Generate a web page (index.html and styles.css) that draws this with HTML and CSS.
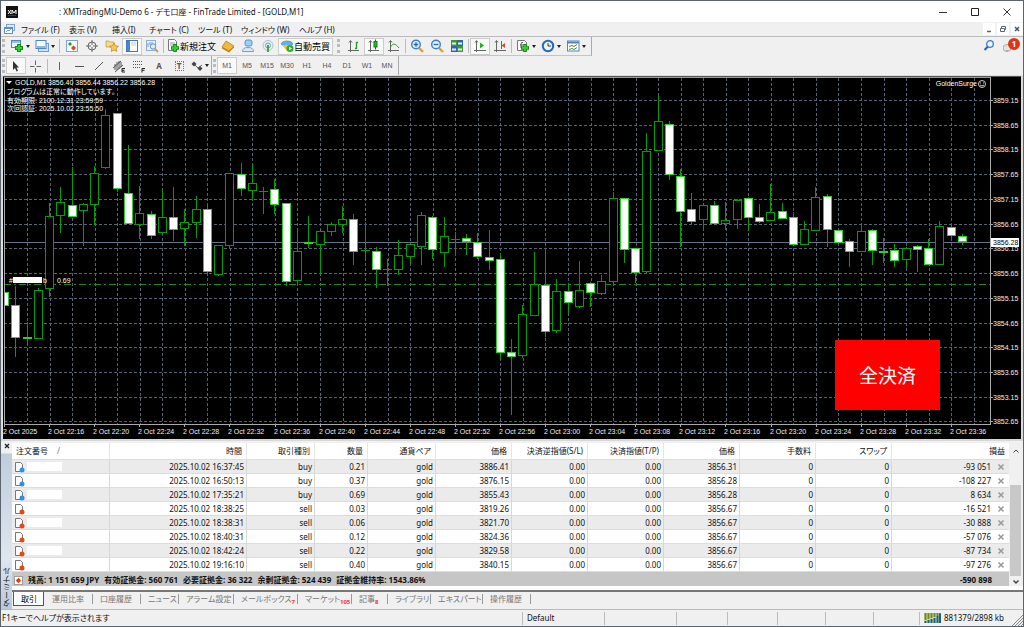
FILE: index.html
```
<!DOCTYPE html>
<html lang="ja">
<head>
<meta charset="utf-8">
<title>XMTradingMU-Demo 6 - FinTrade Limited</title>
<link rel="stylesheet" href="styles.css">
</head>
<body>
<div class="window">
  <header class="titlebar">
    <svg class="logo" viewBox="0 0 12 12"><rect width="12" height="12" fill="#111"/><path d="M2 4l3 4M5 4L2 8M6 8V4l2 3 2-3v4" stroke="#fff" fill="none"/><path d="M2 9.500h8" stroke="#b33" stroke-width=".6"/></svg>
    <h1 class="title">: XMTradingMU-Demo 6 - デモ口座 - FinTrade Limited - [GOLD,M1]</h1>
    <div class="winctl">
      <button aria-label="最小化"><svg viewBox="0 0 10 10"><path d="M1 5.500h8" stroke="#333"/></svg></button>
      <button aria-label="最大化"><svg viewBox="0 0 10 10"><path d="M1.500 1.500h7v7h-7z" stroke="#222" fill="none"/></svg></button>
      <button aria-label="閉じる"><svg viewBox="0 0 10 10"><path d="M1.500 1.500l7 7M8.500 1.500l-7 7" stroke="#333"/></svg></button>
    </div>
  </header>

  <nav class="menubar">
    <svg class="menuicon" viewBox="0 0 11 11"><rect x="2.500" y=".5" width="8" height="6" fill="#dcebfa" stroke="#7aa5d6"/><rect x=".5" y="3.500" width="8" height="6" fill="#fff" stroke="#5b8fcb"/><path d="M.5 4.500h8" stroke="#5b8fcb"/><path d="M2 8l2-2 1 1 2-2" stroke="#7aa5d6" fill="none"/></svg>
    <div class="menus">
      <button>ファイル (F)</button><button>表示 (V)</button><button>挿入(I)</button><button>チャート (C)</button><button>ツール (T)</button><button>ウィンドウ (W)</button><button>ヘルプ (H)</button>
    </div>
    <div class="mdictl">
      <button aria-label="子ウィンドウ最小化"><svg viewBox="0 0 8 8"><path d="M2 6.500h4" stroke="#567" stroke-width="1.500"/></svg></button>
      <button aria-label="元のサイズに戻す"><svg viewBox="0 0 8 8"><path d="M2.500 3V1.500h4v3H5.500M1.500 3.500h4v3h-4z" stroke="#567" fill="none"/></svg></button>
      <button aria-label="子ウィンドウを閉じる"><svg viewBox="0 0 8 8"><path d="M2 2l4 4M6 2L2 6" stroke="#456" stroke-width="1.500"/></svg></button>
    </div>
  </nav>

  <div class="toolrow">
    <div class="toolbar">
      <i class="grip"></i>
      <button class="tool drop" aria-label="新規チャート"><svg viewBox="0 0 14 14"><rect x="1.500" y="1.500" width="9" height="7" fill="#eaf3fc" stroke="#4d88c4"/><path d="M1.500 3h9" stroke="#4d88c4"/><path d="M9 5v8M5 9h8" stroke="#168a16" stroke-width="4"/><path d="M9 6v6M6 9h6" stroke="#2fd02f" stroke-width="2"/></svg><b class="caret"></b></button>
      <button class="tool drop" aria-label="チャートの組表示"><svg viewBox="0 0 14 14"><rect x="3.500" y="4.500" width="10" height="8" fill="#cfe2f5" stroke="#6a9dd0"/><rect x="1" y="1.500" width="10" height="8" fill="#f4f9fe" stroke="#4d88c4"/><path d="M2 8h8" stroke="#8db7e0" stroke-width="2"/></svg><b class="caret"></b></button>
      <i class="sep wide"></i>
      <button class="tool" aria-label="気配値表示"><svg viewBox="0 0 14 14"><rect x="1.500" y="1.500" width="11" height="11" fill="#fff" stroke="#7aa5d6"/><path d="M5 3l2 2-2 2-2-2z" fill="#20a020"/><path d="M8.500 6.500l2.500 2.500-2.500 2.500L6 9z" fill="#e04020"/></svg></button>
      <button class="tool" aria-label="データウィンドウ"><svg viewBox="0 0 14 14"><circle cx="7" cy="7" r="4" fill="none" stroke="#666"/><path d="M7 1v5M7 8v5M1 7h5M8 7h5" stroke="#666"/></svg></button>
      <button class="tool" aria-label="ナビゲーター"><svg viewBox="0 0 14 14"><path d="M1 2h3l1 1h4v5H1z" fill="#f5dc8a" stroke="#c09030" stroke-width=".7"/><path d="M9 4l1.400 2.800 3.100.4-2.300 2.100.6 3.100L9 11l-2.800 1.400.6-3.100-2.300-2.100 3.100-.4z" fill="#f8c850" stroke="#b8821a" stroke-width=".7"/></svg></button>
      <button class="tool on" aria-label="ターミナル"><svg viewBox="0 0 14 14"><rect x="1.500" y="1.500" width="11" height="11" fill="#fff" stroke="#4078b8"/><rect x="2" y="2" width="3" height="10" fill="#4d88c4"/><path d="M6 4h5M6 6h5" stroke="#bcd"/></svg></button>
      <button class="tool" aria-label="ストラテジーテスター"><svg viewBox="0 0 14 14"><rect x="1.500" y="1.500" width="9" height="10" fill="#eaf3fc" stroke="#8ab0d8"/><path d="M3 4v4M5 3v3M7 3v2" stroke="#6a9dd0"/><circle cx="8" cy="7.500" r="2.700" fill="#d8ecfc" stroke="#6b8db0"/><path d="M10 10l3 3" stroke="#d09a40" stroke-width="1.800"/></svg></button>
      <i class="sep"></i>
      <button class="tool label"><svg viewBox="0 0 14 14"><path d="M2.500.5h6l2 2v9h-8z" fill="#fff" stroke="#777"/><path d="M4 4h5M4 6h4" stroke="#999"/><path d="M9 5v8M5 9h8" stroke="#168a16" stroke-width="3.600"/><path d="M9 6v6M6 9h6" stroke="#2fd02f" stroke-width="2"/></svg>新規注文</button>
      <button class="tool" aria-label="メタエディター"><svg viewBox="0 0 14 14"><path d="M5 2l8 5-5 5-7-4z" fill="#f0b93a" stroke="#a87820" stroke-width=".7"/><path d="M1 8l7 4 5-5v1.500L8 13.500 1 9.500z" fill="#b8801c"/></svg></button>
      <button class="tool" aria-label="コミュニティ"><svg viewBox="0 0 14 14"><rect x="4" y="1" width="7" height="6" rx="2" fill="#9cd0f4" stroke="#4a98d0"/><path d="M1.500 12.500c0-3 2-4 5.500-4s5.500 1 5.500 4z" fill="#dce8f2" stroke="#7d9fbd"/></svg></button>
      <button class="tool" aria-label="シグナル"><svg viewBox="0 0 14 14"><circle cx="7" cy="6.500" r="5" fill="#e6eff4" stroke="#a9c0cc"/><circle cx="7" cy="6.500" r="2.500" fill="none" stroke="#69a0c0"/><path d="M7 6v7" stroke="#3aaa3a" stroke-width="2"/></svg></button>
      <button class="tool label on"><svg viewBox="0 0 14 14"><path d="M1 5c1-4 11-4 12 0l-3 2H4z" fill="#62b4e4" stroke="#3a85b5" stroke-width=".7"/><path d="M2 6l5 6 5-6z" fill="#f0c040"/><circle cx="10" cy="9.500" r="3.500" fill="#25b125"/><path d="M9 7.500v4l3-2z" fill="#fff"/></svg>自動売買</button>
      <i class="grip mid"></i>
      <button class="tool" aria-label="バーチャート"><svg viewBox="0 0 14 14"><path d="M3.500 2v11M1 11.500h11M2 3.500l1.500-2 1.500 2" stroke="#666" fill="none"/><path d="M9.500 3v7M9.500 3.500H11M8 9.500h1.500" stroke="#20a020" stroke-width="1.300"/></svg></button>
      <button class="tool on" aria-label="ローソク足"><svg viewBox="0 0 14 14"><path d="M3.500 2v11M1 11.500h11M2 3.500l1.500-2 1.500 2" stroke="#666" fill="none"/><path d="M8.500.5v10" stroke="#108010"/><rect x="7" y="2.500" width="3" height="5.500" fill="#20c020" stroke="#108010"/></svg></button>
      <button class="tool" aria-label="ラインチャート"><svg viewBox="0 0 14 14"><path d="M3.500 2v11M1 11.500h11M2 3.500l1.500-2 1.500 2" stroke="#666" fill="none"/><path d="M3.500 8C6 4 8 4 12 9" stroke="#20a020" fill="none"/></svg></button>
      <i class="sep"></i>
      <button class="tool" aria-label="拡大"><svg viewBox="0 0 14 14"><path d="M9 9l4 4" stroke="#d8a030" stroke-width="2.400"/><circle cx="6" cy="5.500" r="4.300" fill="#dff0ff" stroke="#3c80c8" stroke-width="1.400"/><path d="M6 3.200v4.600M3.700 5.500h4.600" stroke="#2868b0" stroke-width="1.300"/></svg></button>
      <button class="tool" aria-label="縮小"><svg viewBox="0 0 14 14"><path d="M9 9l4 4" stroke="#d8a030" stroke-width="2.400"/><circle cx="6" cy="5.500" r="4.300" fill="#dff0ff" stroke="#3c80c8" stroke-width="1.400"/><path d="M3.700 5.500h4.600" stroke="#2868b0" stroke-width="1.300"/></svg></button>
      <button class="tool" aria-label="整列"><svg viewBox="0 0 14 14"><rect x="1" y="1" width="6" height="6" fill="#3a9a2a"/><rect x="7" y="1" width="6" height="6" fill="#2f62b8"/><rect x="1" y="7" width="6" height="6" fill="#2f62b8"/><rect x="7" y="7" width="6" height="6" fill="#3a9a2a"/><path d="M2 4.500h4M8 4.500h4M2 10.500h4M8 10.500h4" stroke="#e8f4e8" stroke-width="2"/></svg></button>
      <i class="sep"></i>
      <button class="tool on" aria-label="自動スクロール"><svg viewBox="0 0 14 14"><path d="M3.500 2v11M1 11.500h12M2 3.500l1.500-2 1.500 2" stroke="#666" fill="none"/><path d="M7 3.500v6L11 6.500z" fill="#20b020"/></svg></button>
      <button class="tool" aria-label="チャートシフト"><svg viewBox="0 0 14 14"><path d="M3.500 2v11M1 11.500h12M2 3.500l1.500-2 1.500 2M8.500 2v8" stroke="#666" fill="none"/><path d="M12 4v5L8.500 6.500z" fill="#d05020"/></svg></button>
      <i class="sep"></i>
      <button class="tool drop" aria-label="インディケータ"><svg viewBox="0 0 14 14"><path d="M1.500 1.500h7l2 2v8h-9z" fill="#fff" stroke="#777"/><path d="M5 9V5q0-2 2-1.500M4 6h3" stroke="#555" fill="none"/><path d="M9 5v8M5 9h8" stroke="#168a16" stroke-width="3.600"/><path d="M9 6v6M6 9h6" stroke="#2fd02f" stroke-width="2"/></svg><b class="caret"></b></button>
      <button class="tool drop" aria-label="時間足"><svg viewBox="0 0 14 14"><circle cx="7" cy="7" r="5.200" fill="#eaf4ff" stroke="#2468b8" stroke-width="2"/><path d="M7 4v3h3" stroke="#333" fill="none"/></svg><b class="caret"></b></button>
      <button class="tool drop" aria-label="定型チャート"><svg viewBox="0 0 14 14"><rect x="1.500" y="2" width="11.500" height="10" fill="#fff" stroke="#4d88c4"/><path d="M1.500 3.500H13" stroke="#4d88c4" stroke-width="2"/><path d="M3 7.500l3-1 2 1 3-2" stroke="#a06020" fill="none"/><path d="M3 10.500l3-1 2 1 3-2" stroke="#30a030" fill="none"/></svg><b class="caret"></b></button>
    </div>
    <div class="tools-right">
      <button aria-label="検索"><svg viewBox="0 0 14 14"><circle cx="8" cy="5" r="3.300" fill="#eef6ff" stroke="#3a7fd5" stroke-width="1.300"/><path d="M6 7.500L2.500 11" stroke="#2a66c8" stroke-width="2.200"/></svg></button>
      <button class="notice" aria-label="通知"><svg viewBox="0 0 14 14"><ellipse cx="4" cy="9" rx="4" ry="3.500" fill="#e4e4e4" stroke="#aaa"/><path d="M3 11l1 2 2-2z" fill="#aaa"/></svg><span class="badge">1</span></button>
    </div>
  </div>

  <div class="toolrow second">
    <div class="toolbar">
      <i class="grip"></i>
      <button class="tool on" aria-label="カーソル"><svg viewBox="0 0 14 14"><path d="M4 2v9l2-2 1.500 3.500 1.500-.7L7.500 8.500H10z" fill="#333"/></svg></button>
      <button class="tool" aria-label="十字カーソル"><svg viewBox="0 0 14 14"><path d="M6.500 1.500v4.500M6.500 9v4.500M1 7.500h4.500M7.500 7.500H12" stroke="#666"/></svg></button>
      <i class="sep"></i>
      <button class="tool" aria-label="垂直線"><svg viewBox="0 0 14 14"><path d="M7.500 3v8" stroke="#666"/></svg></button>
      <button class="tool" aria-label="水平線"><svg viewBox="0 0 14 14"><path d="M3 7.500h9" stroke="#555"/></svg></button>
      <button class="tool" aria-label="トレンドライン"><svg viewBox="0 0 14 14"><path d="M3 11l8-8" stroke="#555"/></svg></button>
      <button class="tool" aria-label="チャネル"><svg viewBox="0 0 14 14"><path d="M1 9l8-7M3 13l8-7M3 5v6M5 3v8M7 2v8M9 3v5" stroke="#555"/><path d="M13 9.500h-3v3.500h3M10 11.300h2.500" stroke="#222" fill="none"/></svg></button>
      <button class="tool" aria-label="フィボナッチ"><svg viewBox="0 0 14 14"><path d="M1 2.500h10M1 5.500h10M1 8.500h8" stroke="#555" stroke-dasharray="1 1"/><path d="M13 9.500h-3v4M10 11.300h2.500" stroke="#222" fill="none"/></svg></button>
      <button class="tool letter" aria-label="テキスト">A</button>
      <button class="tool letter" aria-label="テキストラベル"><span class="boxed">T</span></button>
      <button class="tool drop" aria-label="矢印"><svg viewBox="0 0 14 14"><path d="M4 2.500L6.500 5 4 7.500 1.500 5z" fill="#444"/><path d="M5 6l3 3 4-3" stroke="#666" fill="none"/><path d="M10 7l2.500 2.500L10 12 7.500 9.500z" fill="#444"/></svg><b class="caret"></b></button>
    </div>
    <div class="toolbar frames">
      <i class="grip"></i>
      <button class="tool on">M1</button><button class="tool">M5</button><button class="tool">M15</button><button class="tool">M30</button><button class="tool">H1</button><button class="tool">H4</button><button class="tool">D1</button><button class="tool">W1</button><button class="tool">MN</button>
    </div>
  </div>

  <main class="chartpane">
    <svg class="chart" id="chart" viewBox="1 75 1022 364" role="img" aria-label="GOLD,M1">
      <rect x="3" y="76" width="1018" height="363" fill="#000"/>
      <path d="M3 76.500h1018" stroke="#555"/>
      <path d="M4 77.500h986" stroke="#999"/>
      <g id="grid" class="grid"></g>
      <path class="priceline" d="M4 242.500h986"/>
      <path class="orderline" d="M4 284.500h986"/>
      <g id="candles"></g>
      <path class="axis" d="M4.500 77v347.500M990.500 77v347.500M4 424.500h987"/>
      <g id="labels" class="axistext"></g>
      <rect x="991" y="238" width="28" height="9" fill="#fff"/>
      <text class="axistext now" x="993" y="245">3856.28</text>
      <path d="M6 81h6l-3 3z" fill="#fff"/>
      <g class="charttext">
        <text x="15" y="85">GOLD,M1</text><text x="48" y="85">3856.40 3856.44 3856.22 3856.28</text>
        <text x="7" y="94">プログラムは正常に動作しています。</text>
        <text x="7" y="103">有効期限: 2100.12.31 23:59:59</text>
        <text x="7" y="111">次回認証: 2025.10.02 23:55:50</text>
        <text x="977" y="86" text-anchor="end">GoldenSurge</text>
        <text x="9" y="283">#</text><text x="43" y="283">b</text><text x="57" y="283">0.69</text>
      </g>
      <rect x="13" y="277" width="29" height="6" fill="#fff"/>
      <circle cx="982" cy="84" r="3.500" fill="none" stroke="#ccc"/>
      <path d="M980 83h1M983 83h1M980 85q2 2 4 0" stroke="#ccc" fill="none"/>
    </svg>
    <button class="closeall">全決済</button>
  </main>

  <section class="terminal">
    <aside class="caption"><button aria-label="閉じる"><svg viewBox="0 0 6 6"><path d="M1 1l4 4M5 1L1 5" stroke="#222" stroke-width="1.300"/></svg></button><span>ターミナル</span></aside>
    <div class="content">
      <div class="listing">
        <table>
          <colgroup><col class="c-order"><col class="c-time"><col class="c-type"><col class="c-lot"><col class="c-type"><col class="c-num"><col class="c-num"><col class="c-num"><col class="c-num"><col class="c-num"><col class="c-num"><col></colgroup>
          <thead><tr><th class="first">注文番号<span class="sort">/</span></th><th>時間</th><th>取引種別</th><th>数量</th><th>通貨ペア</th><th>価格</th><th>決済逆指値(S/L)</th><th>決済指値(T/P)</th><th>価格</th><th>手数料</th><th>スワップ</th><th>損益</th></tr></thead>
          <tbody id="orders"></tbody>
          <tfoot><tr><td colspan="11"><svg class="sumicon" viewBox="0 0 10 10"><rect x=".5" y=".5" width="9" height="9" fill="#fff" stroke="#999"/><path d="M5 2l3 3-3 3-3-3z" fill="#d8401c"/></svg><span>残高: 1 151 659 JPY</span><span>有効証拠金: 560 761</span><span>必要証拠金: 36 322</span><span>余剰証拠金: 524 439</span><span>証拠金維持率: 1543.86%</span></td><td class="profit">-590 898</td></tr></tfoot>
        </table>
        <div class="scroll"><button aria-label="上へ"><svg viewBox="0 0 8 8"><path d="M1.500 5.500L4 3l2.500 2.500" stroke="#444" fill="none"/></svg></button><div class="track"><div class="thumb"></div></div><button aria-label="下へ"><svg viewBox="0 0 8 8"><path d="M1.500 2.500L4 5l2.500-2.500" stroke="#444" stroke-width="1.500" fill="none"/></svg></button></div>
      </div>
      <div class="tabs">
        <button class="active">取引</button><button>運用比率</button><button>口座履歴</button><button>ニュース</button><button>アラーム設定</button><button>メールボックス<sub>7</sub></button><button>マーケット<sub>105</sub></button><button>記事<sub>8</sub></button><button>ライブラリ</button><button>エキスパート</button><button>操作履歴</button>
      </div>
    </div>
  </section>

  <footer class="status">
    <span class="help">F1キーでヘルプが表示されます</span><span>Default</span><span></span><span></span><span></span><span></span><span></span><span></span>
    <span class="traffic"><svg viewBox="0 0 17 10"><rect width="17" height="10" fill="#cfd8a0"/><path d="M1.500 0v7M4.500 0v6M7.500 0v5M10.500 0v4M13.500 0v3M16 0v1" stroke="#6c8c20" stroke-width="2"/><path d="M1.500 10V8M4.500 10V7M7.500 10V6M10.500 10V5M13.500 10V3M16 10V1" stroke="#1d5f84" stroke-width="2"/></svg>881379/2898 kb</span>
    <svg class="resize" viewBox="0 0 12 16"><path d="M1 16L12 5M4 16l8-8M7 16l5-5M10 16l2-2" stroke="#888"/></svg>
  </footer>
</div>
<script src="chart.js"></script>
</body>
</html>
```
FILE: styles.css
```
* { box-sizing: border-box; }
body { margin: 0; font-family: "Noto Sans", "Noto Sans CJK JP", sans-serif; font-size: 8px; color: #111; background: #f0f0f0; font-feature-settings: "palt"; }
button { font: inherit; color: inherit; font-feature-settings: inherit; border: 0; padding: 0; margin: 0; background: none; }
.window { min-height: 100vh; display: flex; flex-direction: column; border: 1px solid #5c6470; background: #f0f0f0; }

.titlebar { display: flex; align-items: center; height: 21px; background: #fff; padding-left: 5px; }
.logo { width: 12px; height: 12px; }
.title { flex: 1; margin: 0 0 0 41px; font-size: 8px; font-weight: 400; }
.winctl { display: flex; }
.winctl button { width: 32px; height: 20px; display: grid; place-items: center; }
.winctl svg { width: 10px; height: 10px; }

.menubar { display: flex; align-items: center; height: 14px; padding-left: 3px; }
.menuicon { width: 11px; height: 11px; }
.menus { flex: 1; margin-left: 6px; display: grid; grid-template-columns: 48px 43px 37px 49px 43px 58px auto; justify-items: start; }
.menus button { white-space: nowrap; }
.mdictl { display: flex; gap: 2px; }
.mdictl button { width: 12px; height: 12px; background: #fff; display: grid; place-items: center; }
.mdictl svg { width: 8px; height: 8px; }

.toolrow { display: flex; height: 20px; border-top: 1px solid #bbb; }
.toolrow.second { height: 19px; border-top: 0; }
.toolbar { display: flex; align-items: center; border-right: 1px solid #aaa; border-bottom: 1px solid #c4c4c4; padding-right: 3px; }
.grip { width: 3px; height: 14px; margin: 0 2px 0 1px; border-left: 3px dotted #bbb; }
.grip.mid { margin: 0 4px; }
.sep { width: 1px; height: 14px; background: #bbb; margin: 0 1px; }
.sep.wide { margin: 0 2px; }
.tool { width: 20px; height: 17px; display: flex; align-items: center; justify-content: center; }
.tool svg { width: 14px; height: 14px; flex: none; }
.tool.on { background: #f8faf7; border: 1px solid #ccc; }
.tool.drop { width: 25px; gap: 2px; }
.tool.label { width: auto; padding: 0 2px 0 1px; font-size: 9px; color: #000; }
.caret { border: 2px solid transparent; border-top: 3px solid #222; border-bottom: 0; }
.second .toolbar { border-bottom: 0; padding-right: 1px; }
.second .grip { margin: 0 1px; }
.second .tool.drop { width: 21px; gap: 1px; }
.letter { font-weight: 700; color: #555; }
.boxed { border: 1px dotted #777; line-height: 8px; width: 9px; }
.frames { font-family: "Liberation Sans", sans-serif; font-size: 7px; color: #555; }
.tools-right { margin-left: auto; display: flex; align-items: center; gap: 6px; padding-right: 3px; }
.tools-right button { width: 17px; height: 17px; }
.tools-right svg { width: 14px; height: 14px; }
.notice { position: relative; text-align: left; }
.badge { position: absolute; right: 0; top: 0; width: 12px; height: 12px; border-radius: 50%; background: #e03418; color: #fff; font: 700 8px/12px "Noto Sans", sans-serif; text-align: center; }

.chartpane { position: relative; background: #dcdcdc; }
.chart { display: block; width: 100%; height: auto; }
.grid path { stroke: #566473; stroke-dasharray: 3 2; }
.priceline { stroke: #66758a; }
.orderline { stroke: #1f8a1f; stroke-dasharray: 7 3 2 3; }
.axis { stroke: #aaa; fill: none; }
.up { fill: #000; stroke: #00a000; }
.down { fill: #fff; stroke: #22d822; }
.wick { stroke: #00a000; }
.axistext { font-family: "Liberation Sans", sans-serif; font-size: 7px; fill: #eee; }
.axistext.now { fill: #000; }
.charttext { font-family: "Liberation Sans", "Noto Sans CJK JP", sans-serif; font-size: 7px; fill: #fff; }
.closeall { position: absolute; right: 83px; bottom: 29px; width: 105px; height: 70px; background: #f00; color: #fff; font-size: 19px; font-feature-settings: normal; }

.terminal { display: flex; border-top: 2px solid #d8d8d8; padding-top: 2px; }
.caption { width: 11px; display: flex; flex-direction: column; justify-content: space-between; align-items: center; background: linear-gradient(#f0f0f0 10px, #bfcddc 11px, #dfe6ee 70%, #b8c8da); padding-bottom: 2px; }
.caption svg { width: 6px; height: 6px; display: block; }
.caption span { writing-mode: vertical-rl; transform: rotate(180deg); line-height: 10px; }
.content { flex: 1; min-width: 0; }
.listing { display: flex; background: #fff; border-bottom: 2px solid #777; padding-bottom: 4px; }
table { flex: 1; width: 100%; min-width: 0; table-layout: fixed; border-collapse: separate; border-spacing: 0; }
.c-order { width: 98px; }
.c-time { width: 137px; }
.c-type { width: 68px; }
.c-lot { width: 53px; }
.c-num { width: 76px; }
th, td { padding: 0 2px; height: 14px; line-height: 12px; text-align: right; font-weight: 400; white-space: nowrap; border-right: 1px solid #d3d9d9; border-bottom: 1px solid #d9dede; overflow: hidden; }
th { height: 17px; padding-right: 4px; border-right-color: #e6e6e6; }
th.first { text-align: left; padding-left: 4px; }
.sort { margin-left: 9px; color: #777; }
th:last-child, td:last-child { border-right: 0; }
tbody tr:nth-child(odd) td { background: #ebebeb; }
td.order { text-align: left; }
td.order svg { width: 11px; height: 12px; vertical-align: top; }
.mask { display: inline-block; width: 35px; height: 9px; margin: 1px 0 0 2px; background: #fff; vertical-align: top; }
td .x { display: inline-block; width: 8px; height: 8px; margin: 0 2px 0 6px; vertical-align: middle; }
td .x svg { width: 8px; height: 8px; display: block; }
tfoot td { background: #c6c6c6; border: 0; text-align: left; font-weight: 700; line-height: 13px; }
tfoot span { margin-right: 5px; }
tfoot td.profit { text-align: right; padding-right: 17px; }
.sumicon { width: 9px; height: 9px; margin-right: 5px; vertical-align: middle; }
.scroll { width: 14px; display: flex; flex-direction: column; align-items: center; background: #f0f0f0; padding: 4px 0 0; }
.scroll button { height: 8px; }
.scroll svg { width: 8px; height: 8px; display: block; }
.track { flex: 1; align-self: stretch; padding: 30px 2px 2px 1px; }
.thumb { height: 100%; background: #c8c8c8; }
.tabs { display: grid; grid-template-columns: 33px 48px 48px 38px 55px 64px 54px 36px 43px 52px 48px; height: 17px; color: #777; }
.tabs button { text-align: left; white-space: nowrap; border-right: 1px solid #999; height: 10px; line-height: 10px; margin-top: 2px; padding-left: 7px; }
.tabs .active { background: #fff; color: #000; border: 1px solid #555; border-top: 0; height: 14px; line-height: 14px; margin: 0 1px; }
.tabs sub { color: #f33; font-size: 6px; font-weight: 700; line-height: 6px; vertical-align: -2px; }

.status { flex: 1; display: grid; grid-template-columns: 521px 82px 72px 51px 50px 48px 48px 46px 1fr 12px; align-items: center; border-top: 1px solid #bbb; }
.status span { height: 13px; line-height: 12px; padding-left: 4px; border-left: 1px solid #bbb; white-space: nowrap; }
.status .help { border: 0; padding-left: 1px; }
.status .traffic { display: flex; align-items: center; gap: 3px; }
.traffic svg { width: 17px; height: 10px; }
.resize { width: 12px; height: 16px; }
```
FILE: chart.js
```
// Each candle: high, body top, body bottom, low, direction (1 rising, 0 falling)
const candles = [
[271,292,306,312,0],[286,305,338,357,0],[322,337,339,346,0],[288,290,339,339,1],[203,216,289,297,1],[187,202,216,233,1],[167,205,217,217,0],[203,204,211,246,1],
[166,173,205,225,1],[109,115,168,169,1],[113,113,189,192,0],[145,193,224,224,0],[186,213,225,239,1],[211,214,236,239,0],[190,217,233,233,1],[187,217,230,241,0],
[209,222,229,246,1],[196,209,223,238,1],[206,209,272,275,0],[245,245,275,276,1],[173,173,246,249,1],[163,174,189,196,0],[163,183,191,200,1],[187,191,192,214,1],
[179,189,205,214,0],[203,203,282,286,0],[229,251,281,284,1],[216,242,244,248,0],[231,231,245,273,1],[222,224,232,236,1],[206,219,225,233,1],[214,219,252,265,0],
[222,250,251,259,1],[247,251,270,288,0],[259,269,270,286,1],[240,255,270,275,1],[244,244,257,263,1],[212,215,247,265,1],[216,217,250,259,0],[217,236,253,267,1],
[232,239,240,255,1],[234,238,242,255,0],[233,242,257,259,0],[230,257,261,270,0],[254,259,353,360,0],[339,352,357,415,0],[305,314,356,358,1],[252,284,316,316,1],
[249,285,332,337,0],[279,291,331,333,1],[283,291,303,313,0],[261,290,307,308,1],[282,283,293,307,0],[275,281,294,295,1],[192,198,282,283,1],[198,198,250,263,0],
[248,248,273,283,0],[133,151,272,273,1],[95,121,151,151,1],[121,124,175,180,0],[169,176,212,247,0],[193,209,222,225,0],[204,205,220,229,1],[201,205,224,224,0],
[202,220,224,230,1],[199,200,220,229,1],[197,198,218,229,0],[204,217,222,223,0],[184,212,221,221,1],[203,211,219,219,0],[212,217,245,245,0],[221,229,245,245,1],
[187,197,231,231,1],[194,196,230,247,0],[229,230,243,243,0],[239,241,252,267,0],[225,231,252,252,1],[229,230,251,265,0],[238,251,253,263,0],[244,250,261,267,0],
[247,248,260,268,1],[245,246,250,272,0],[239,248,265,265,0],[221,226,265,265,1],[224,227,236,239,0],[234,236,242,245,0]];

let marks = "";
candles.forEach(([high, top, bottom, low, up], i) => {
  const x = Math.round(4 + 11.27 * i);
  const left = Math.max(x - 4, 4);
  const h = Math.max(bottom - top - 1, 0);
  marks += `<path class="wick" d="M${x + 0.5} ${high}V${low}"/>`;
  marks += h < 1
    ? `<path class="wick" d="M${left} ${top + 0.5}H${x + 5}"/>`
    : `<rect class="${up ? "up" : "down"}" x="${left + 0.5}" y="${top + 0.5}" width="${x + 4 - left}" height="${h}"/>`;
});
document.getElementById("candles").innerHTML = marks;

let grid = "", labels = "";
for (let k = 0; k < 43; k++) {
  const x = Math.round(27 + 22.54 * k) + 0.5;
  grid += `<path d="M${x} 78V424"/>`;
}
for (let k = 0; k < 14; k++) {
  const y = Math.round(100 + 24.73 * k);
  grid += `<path d="M4 ${y + 0.5}H990"/>`;
  labels += `<path class="axis" d="M990 ${y + 0.5}h3"/><text x="993" y="${y + 3}">${(3859.15 - k * 0.5).toFixed(2)}</text>`;
}
for (let k = 0; k < 22; k++) {
  const x = Math.round(4 + 45.09 * k);
  const min = 12 + 4 * k;
  const time = k ? `${22 + Math.floor(min / 60)}:${String(min % 60).padStart(2, "0")}` : "2025";
  labels += `<path class="axis" d="M${x + 0.5} 424v3"/><text x="${x - 1}" y="434">2 Oct ${time}</text>`;
}
document.getElementById("grid").innerHTML = grid;
document.getElementById("labels").innerHTML = labels;

const orders = [
["2025.10.02 16:37:45","buy","0.21","3886.41","3856.31","-93 051"],
["2025.10.02 16:50:13","buy","0.37","3876.15","3856.28","-108 227"],
["2025.10.02 17:35:21","buy","0.69","3855.43","3856.28","8 634"],
["2025.10.02 18:38:25","sell","0.03","3819.26","3856.67","-16 521"],
["2025.10.02 18:38:31","sell","0.06","3821.70","3856.67","-30 888"],
["2025.10.02 18:40:31","sell","0.12","3824.36","3856.67","-57 076"],
["2025.10.02 18:42:24","sell","0.22","3829.58","3856.67","-87 734"],
["2025.10.02 19:16:10","sell","0.40","3840.15","3856.67","-97 276"]];
document.getElementById("orders").innerHTML = orders.map(([time, type, lot, open, now, profit]) => {
  const ball = type === "buy" ? "#2f8fe0" : "#e04a18";
  return `<tr><td class="order"><svg viewBox="0 0 11 12"><path d="M1.500 1.500h5l2 2v7h-7z" fill="#fff" stroke="#777"/><circle cx="8" cy="9" r="2.500" fill="${ball}"/></svg><span class="mask"></span></td>` +
    [time, type, lot, "gold", open, "0.00", "0.00", now, "0", "0"].map(v => `<td>${v}</td>`).join("") +
    `<td>${profit}<button class="x" aria-label="決済"><svg viewBox="0 0 8 8"><path d="M1.500 1.500l5 5M6.500 1.500l-5 5" stroke="#999" stroke-width="1.500"/></svg></button></td></tr>`;
}).join("");
```
